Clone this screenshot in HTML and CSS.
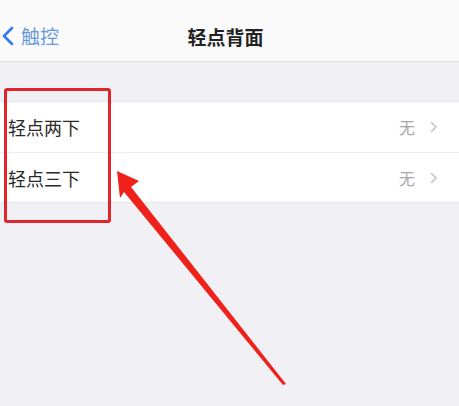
FILE: index.html
```html
<!DOCTYPE html>
<html lang="zh">
<head>
<meta charset="utf-8">
<link rel="stylesheet" href="styles.css">
</head>
<body>
<div class="screen">
  <header class="nav">
    <div class="back">
      <svg class="back-icon" width="13" height="20" viewBox="0 0 13 20"><path d="M11 2 L3 10 L11 18" fill="none" stroke="#3478f6" stroke-width="2.6" stroke-linecap="round" stroke-linejoin="round"/></svg>
      <span class="back-text">触控</span>
    </div>
    <div class="title">轻点背面</div>
  </header>
  <div class="gap"></div>
  <ul class="list">
    <li class="row">
      <span class="label">轻点两下</span>
      <span class="value">无</span>
      <svg class="chev" width="8" height="12" viewBox="0 0 8 12"><path d="M1.5 1.5 L6 6 L1.5 10.5" fill="none" stroke="#c4c4c8" stroke-width="1.6" stroke-linecap="round" stroke-linejoin="round"/></svg>
    </li>
    <li class="row">
      <span class="label">轻点三下</span>
      <span class="value">无</span>
      <svg class="chev" width="8" height="12" viewBox="0 0 8 12"><path d="M1.5 1.5 L6 6 L1.5 10.5" fill="none" stroke="#c4c4c8" stroke-width="1.6" stroke-linecap="round" stroke-linejoin="round"/></svg>
    </li>
  </ul>
  <div class="highlight"></div>
  <svg class="arrow" width="459" height="406" viewBox="0 0 459 406">
    <polygon points="117,171 139,181 131,187 286,384 283,385 124,192 120,198" fill="#f0211a"/>
  </svg>
</div>
</body>
</html>
```
FILE: styles.css
```css
* { box-sizing: border-box; }
html, body { margin: 0; padding: 0; }
body {
  width: 459px;
  height: 406px;
  overflow: hidden;
  background: #f1f1f5;
  font-family: "Noto Sans CJK SC", "Noto Sans", sans-serif;
}
.screen {
  position: relative;
  width: 459px;
  height: 406px;
}
.nav {
  position: relative;
  height: 62px;
  background: #fafafa;
  border-bottom: 1px solid #dedee2;
  display: flex;
  align-items: center;
}
.back {
  display: flex;
  align-items: center;
  gap: 7px;
  padding-left: 1px;
  padding-top: 10px;
}
.back-text {
  color: #6a98dc;
  font-size: 19px;
  line-height: 20px;
}
.title {
  position: absolute;
  left: 0;
  right: 0;
  top: 27px;
  text-align: center;
  font-size: 19px;
  font-weight: 700;
  line-height: 20px;
  color: #222;
  padding-right: 8px;
}
.gap { height: 39px; }
.list {
  list-style: none;
  margin: 0;
  padding: 0;
  background: #fff;
  border-top: 1px solid #e6e6ea;
  border-bottom: 1px solid #e6e6ea;
}
.row {
  height: 50px;
  display: flex;
  align-items: center;
  padding-left: 8px;
  padding-right: 21px;
}
.row + .row { border-top: 1px solid #ececef; }
.label {
  flex: 1;
  font-size: 18px;
  color: #2a2a2a;
}
.value {
  font-size: 16px;
  color: #a8a8ac;
  margin-right: 15px;
}
.highlight {
  position: absolute;
  left: 4px;
  top: 88px;
  width: 107px;
  height: 135px;
  border: 3px solid #e0262a;
  border-radius: 3px;
}
.arrow {
  position: absolute;
  left: 0;
  top: 0;
}
```
